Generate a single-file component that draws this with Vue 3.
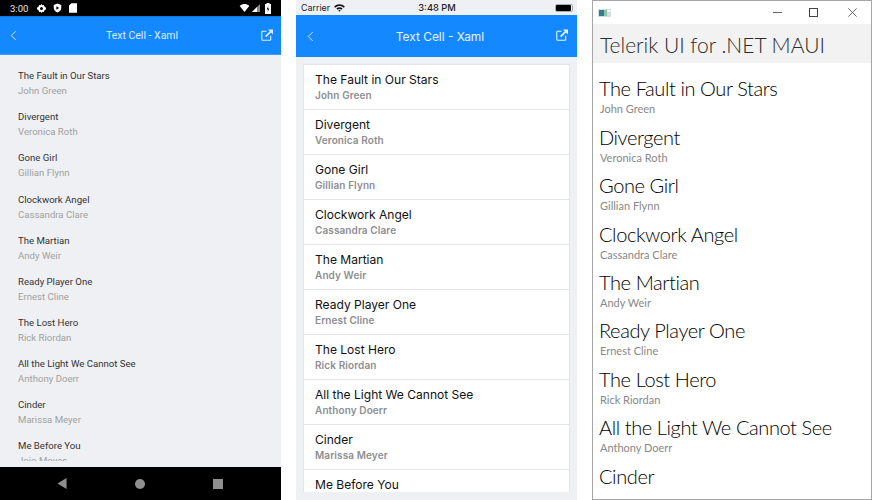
<script setup>
const books = [
  { title: 'The Fault in Our Stars', author: 'John Green' },
  { title: 'Divergent', author: 'Veronica Roth' },
  { title: 'Gone Girl', author: 'Gillian Flynn' },
  { title: 'Clockwork Angel', author: 'Cassandra Clare' },
  { title: 'The Martian', author: 'Andy Weir' },
  { title: 'Ready Player One', author: 'Ernest Cline' },
  { title: 'The Lost Hero', author: 'Rick Riordan' },
  { title: 'All the Light We Cannot See', author: 'Anthony Doerr' },
  { title: 'Cinder', author: 'Marissa Meyer' },
  { title: 'Me Before You', author: 'Jojo Moyes' }
]
</script>

<template>
  <div class="page">
    <!-- android -->
    <section class="android">
      <div class="a-status">
        <span class="a-time">3:00</span>
        <svg viewBox="0 0 12 12" width="9" height="9"><path d="M6 0l1.200 1.600 2-.3.6 2L12 5v2l-2.200 1.700-.6 2-2-.3L6 12l-1.200-1.600-2 .3-.6-2L0 7V5l2.200-1.700.6-2 2 .3z" fill="#fff"/><circle cx="6" cy="6" r="2" fill="#000"/></svg>
        <svg viewBox="0 0 12 12" width="9" height="10"><path d="M6 0l5 2v4c0 3-2.200 5-5 6-2.800-1-5-3-5-6V2z" fill="#fff"/><path d="M4.500 3.800L8.300 6 4.500 8.200z" fill="#000"/></svg>
        <svg viewBox="0 0 10 12" width="8" height="10"><path d="M3 0h7v12H0V3z" fill="#fff"/></svg>
        <span class="a-spacer"></span>
        <svg viewBox="0 0 12 10" width="11" height="8"><path d="M0 2.500C3.500-.8 8.500-.8 12 2.500L6 10z" fill="#fff"/></svg>
        <svg class="a-signal" viewBox="0 0 8 8" width="8" height="8"><path d="M8 0v8H0z" fill="#8a8a8a"/><path d="M5 3v5H0z" fill="#fff"/></svg>
        <svg class="a-batt" viewBox="0 0 6 11" width="6" height="11"><path d="M1.500 1V0h3v1H6v10H0V1z" fill="#fff"/><path d="M3.300 3L1.700 6.500h1.300L2.700 9l1.600-3.500H3z" fill="#000"/></svg>
      </div>
      <header class="a-bar">
        <svg viewBox="0 0 8 12" width="7" height="11"><path d="M6.500 1L1.500 6l5 5" fill="none" stroke="#d8eaff" stroke-width="1.100"/></svg>
        <span class="a-title">Text Cell - Xaml</span>
        <svg class="share" viewBox="0 0 12 12" width="12" height="12"><path d="M5.500 2.300H1.600a.8.8 0 0 0-.8.8v7.300c0 .4.400.8.800.8h7.300c.4 0 .8-.4.800-.8V6.800" fill="none" stroke="#dcecff" stroke-width="1.100"/><path d="M4.600 7.600L9.600 2.600" fill="none" stroke="#dcecff" stroke-width="1.700"/><path d="M7 .5h5v5z" fill="#dcecff"/></svg>
      </header>
      <div class="a-list">
        <div class="a-clip">
          <div v-for="b in books" :key="b.title" class="a-row">
            <div class="a-name">{{ b.title }}</div>
            <div class="a-author">{{ b.author }}</div>
          </div>
        </div>
      </div>
      <nav class="a-nav">
        <svg viewBox="0 0 10 12" width="10" height="11"><path d="M10 0v12L0 6z" fill="#8f8f8f"/></svg>
        <span class="a-dot"></span>
        <span class="a-square"></span>
      </nav>
    </section>

    <!-- ios -->
    <section class="ios">
      <div class="i-status">
        <span class="i-carrier">Carrier
          <svg viewBox="0 0 12 9" width="11" height="8"><path d="M0 3C3.400-.6 8.600-.6 12 3l-1.200 1.300C8 1.600 4 1.600 1.200 4.300z" fill="#111"/><path d="M2.500 5.200c2-2 5-2 7 0L8.300 6.500c-1.300-1.300-3.300-1.300-4.600 0z" fill="#111"/><path d="M4.800 7.300c.7-.6 1.700-.6 2.400 0L6 8.800z" fill="#111"/></svg>
        </span>
        <span class="i-time">3:48 PM</span>
        <span class="i-right"><span class="i-batt"><i></i></span></span>
      </div>
      <header class="i-bar">
        <svg viewBox="0 0 8 12" width="7" height="11"><path d="M6.500 1L1.500 6l5 5" fill="none" stroke="#d8eaff" stroke-width="1.100"/></svg>
        <span class="i-title">Text Cell - Xaml</span>
        <svg class="share" viewBox="0 0 12 12" width="12" height="12"><path d="M5.500 2.300H1.600a.8.8 0 0 0-.8.8v7.300c0 .4.400.8.800.8h7.300c.4 0 .8-.4.800-.8V6.800" fill="none" stroke="#e8f3ff" stroke-width="1.100"/><path d="M4.600 7.600L9.600 2.600" fill="none" stroke="#e8f3ff" stroke-width="1.700"/><path d="M7 .5h5v5z" fill="#e8f3ff"/></svg>
      </header>
      <div class="i-list">
        <div class="i-card">
          <div v-for="b in books" :key="b.title" class="i-row">
            <div class="i-name">{{ b.title }}</div>
            <div class="i-author">{{ b.author }}</div>
          </div>
        </div>
      </div>
    </section>

    <!-- windows -->
    <section class="win">
      <div class="w-titlebar">
        <svg viewBox="0 0 13 8" width="13" height="8"><rect width="13" height="8" fill="#d3dee1"/><rect x="1" y="1" width="5" height="6" fill="#2f7f94"/><rect x="6" y="1" width="3" height="6" fill="#8cc6a6"/><rect x="9" y="1" width="3" height="2" fill="#fff"/></svg>
        <span class="w-spacer"></span>
        <span class="w-min"></span>
        <span class="w-max"></span>
        <svg viewBox="0 0 9 9" width="9" height="9"><path d="M.4.400l8.200 8.200M8.600.400L.4 8.600" stroke="#444" stroke-width=".8"/></svg>
      </div>
      <header class="w-header">Telerik UI for .NET MAUI</header>
      <div class="w-list">
        <div v-for="(b, i) in books.slice(0, 9)" :key="b.title" class="w-row">
          <div class="w-name">{{ b.title }}</div>
          <div v-if="i < 8" class="w-author">{{ b.author }}</div>
        </div>
      </div>
    </section>
  </div>
</template>

<style>
html, body { background: #fff; }
</style>

<style scoped>
.page {
  width: 872px;
  height: 500px;
  display: flex;
  overflow: hidden;
  background: #fff;
}
.share { margin-top: -2px; }

.android {
  width: 281px;
  height: 500px;
  display: flex;
  flex-direction: column;
  background: #eff0f4;
  font-family: Roboto, sans-serif;
}
.a-status {
  height: 16px;
  flex-shrink: 0;
  background: #000;
  display: flex;
  align-items: center;
  gap: 7px;
  padding: 0 10px;
  color: #e8e8e8;
}
.a-time { font-size: 9.500px; margin-right: 2px; }
.a-spacer { flex: 1; }
.a-signal { margin-left: -5px; }
.a-batt { margin-left: -2px; }
.a-bar {
  height: 37px;
  flex-shrink: 0;
  background: #1488ff;
  display: flex;
  align-items: center;
  justify-content: space-between;
  padding: 0 8px 0 10px;
  border-top: 1px solid #0f76dc;
  border-bottom: 1px solid #3d9cff;
}
.a-title { color: #dcecff; font-size: 10.500px; margin-left: 6px; }
.a-list {
  flex: 1;
  min-height: 0;
  padding: 14.400px 0 6px;
  box-sizing: border-box;
}
.a-clip { height: 100%; overflow: hidden; }
.a-row {
  height: 41.050px;
  padding-left: 18px;
}
.a-name { font-size: 9.600px; line-height: 14px; color: #333; }
.a-author { font-size: 9.600px; line-height: 16px; color: #a0a0a0; }
.a-nav {
  height: 33px;
  background: #000;
  display: flex;
  align-items: center;
  justify-content: space-between;
  padding: 0 58px 0 57px;
  flex-shrink: 0;
}
.a-dot { width: 10px; height: 10px; border-radius: 50%; background: #8f8f8f; }
.a-square { width: 10px; height: 10px; background: #8f8f8f; }

.ios {
  width: 281px;
  height: 500px;
  margin-left: 15px;
  display: flex;
  flex-direction: column;
  background: #eff0f4;
  font-family: Inter, sans-serif;
}
.i-status {
  height: 15px;
  flex-shrink: 0;
  display: grid;
  grid-template-columns: 1fr auto 1fr;
  align-items: center;
  padding: 0 4px 0 5px;
  color: #222;
  font-size: 9.300px;
}
.i-carrier { display: flex; align-items: center; gap: 4px; font-size: 8.900px; }
.i-time { font-weight: 500; }
.i-right { display: flex; justify-content: flex-end; }
.i-batt {
  width: 18px;
  height: 8px;
  border-radius: 2px;
  border: 1px solid #aaa;
  box-sizing: border-box;
  display: block;
}
.i-batt i { display: block; width: 15px; height: 6px; background: #000; border-radius: 1px; }
.i-bar {
  height: 42px;
  flex-shrink: 0;
  background: #1488ff;
  display: flex;
  align-items: center;
  justify-content: space-between;
  padding: 0 9px 0 11px;
}
.i-title { color: #e8f3ff; font-size: 11.900px; margin-left: 10px; }
.i-list {
  flex: 1;
  min-height: 0;
  padding: 7px 7px 8px;
  box-sizing: border-box;
}
.i-card {
  height: 100%;
  background: #fff;
  border: 1px solid #e4e5e9;
  border-bottom: 0;
  box-sizing: border-box;
  overflow: hidden;
}
.i-row {
  height: 45px;
  box-sizing: border-box;
  padding: 7px 0 0 11px;
  border-bottom: 1px solid #e4e5e9;
}
.i-name { font-size: 12.050px; line-height: 16px; color: #111; }
.i-author { font-size: 10px; line-height: 15px; font-weight: 600; color: #8e8e92; letter-spacing: .1px; }

.win {
  width: 280px;
  height: 500px;
  margin-left: 15px;
  box-sizing: border-box;
  border: 1px solid #a6a6a6;
  display: flex;
  flex-direction: column;
  font-family: Lato, sans-serif;
  background: #fff;
  overflow: hidden;
}
.w-titlebar {
  height: 23px;
  display: flex;
  align-items: center;
  padding: 0 14px 0 5px;
  flex-shrink: 0;
}
.w-spacer { flex: 1; }
.w-min { width: 9px; height: 1px; background: #666; margin-right: 27px; }
.w-max { width: 9px; height: 9px; border: 1px solid #444; box-sizing: border-box; margin-right: 30px; }
.w-header {
  height: 39px;
  flex-shrink: 0;
  background: #f2f2f2;
  padding-left: 7px;
  font-size: 21px;
  font-weight: 300;
  line-height: 41px;
  color: #2a2a2a;
}
.w-list { flex: 1; overflow: hidden; padding-top: 12.400px; }
.w-row { height: 48.400px; padding-left: 6px; }
.w-name { font-size: 20px; font-weight: 300; line-height: 27px; color: #000; letter-spacing: -.4px; }
.w-author { font-size: 11px; line-height: 14px; color: #888; padding-left: 1px; }
</style>
